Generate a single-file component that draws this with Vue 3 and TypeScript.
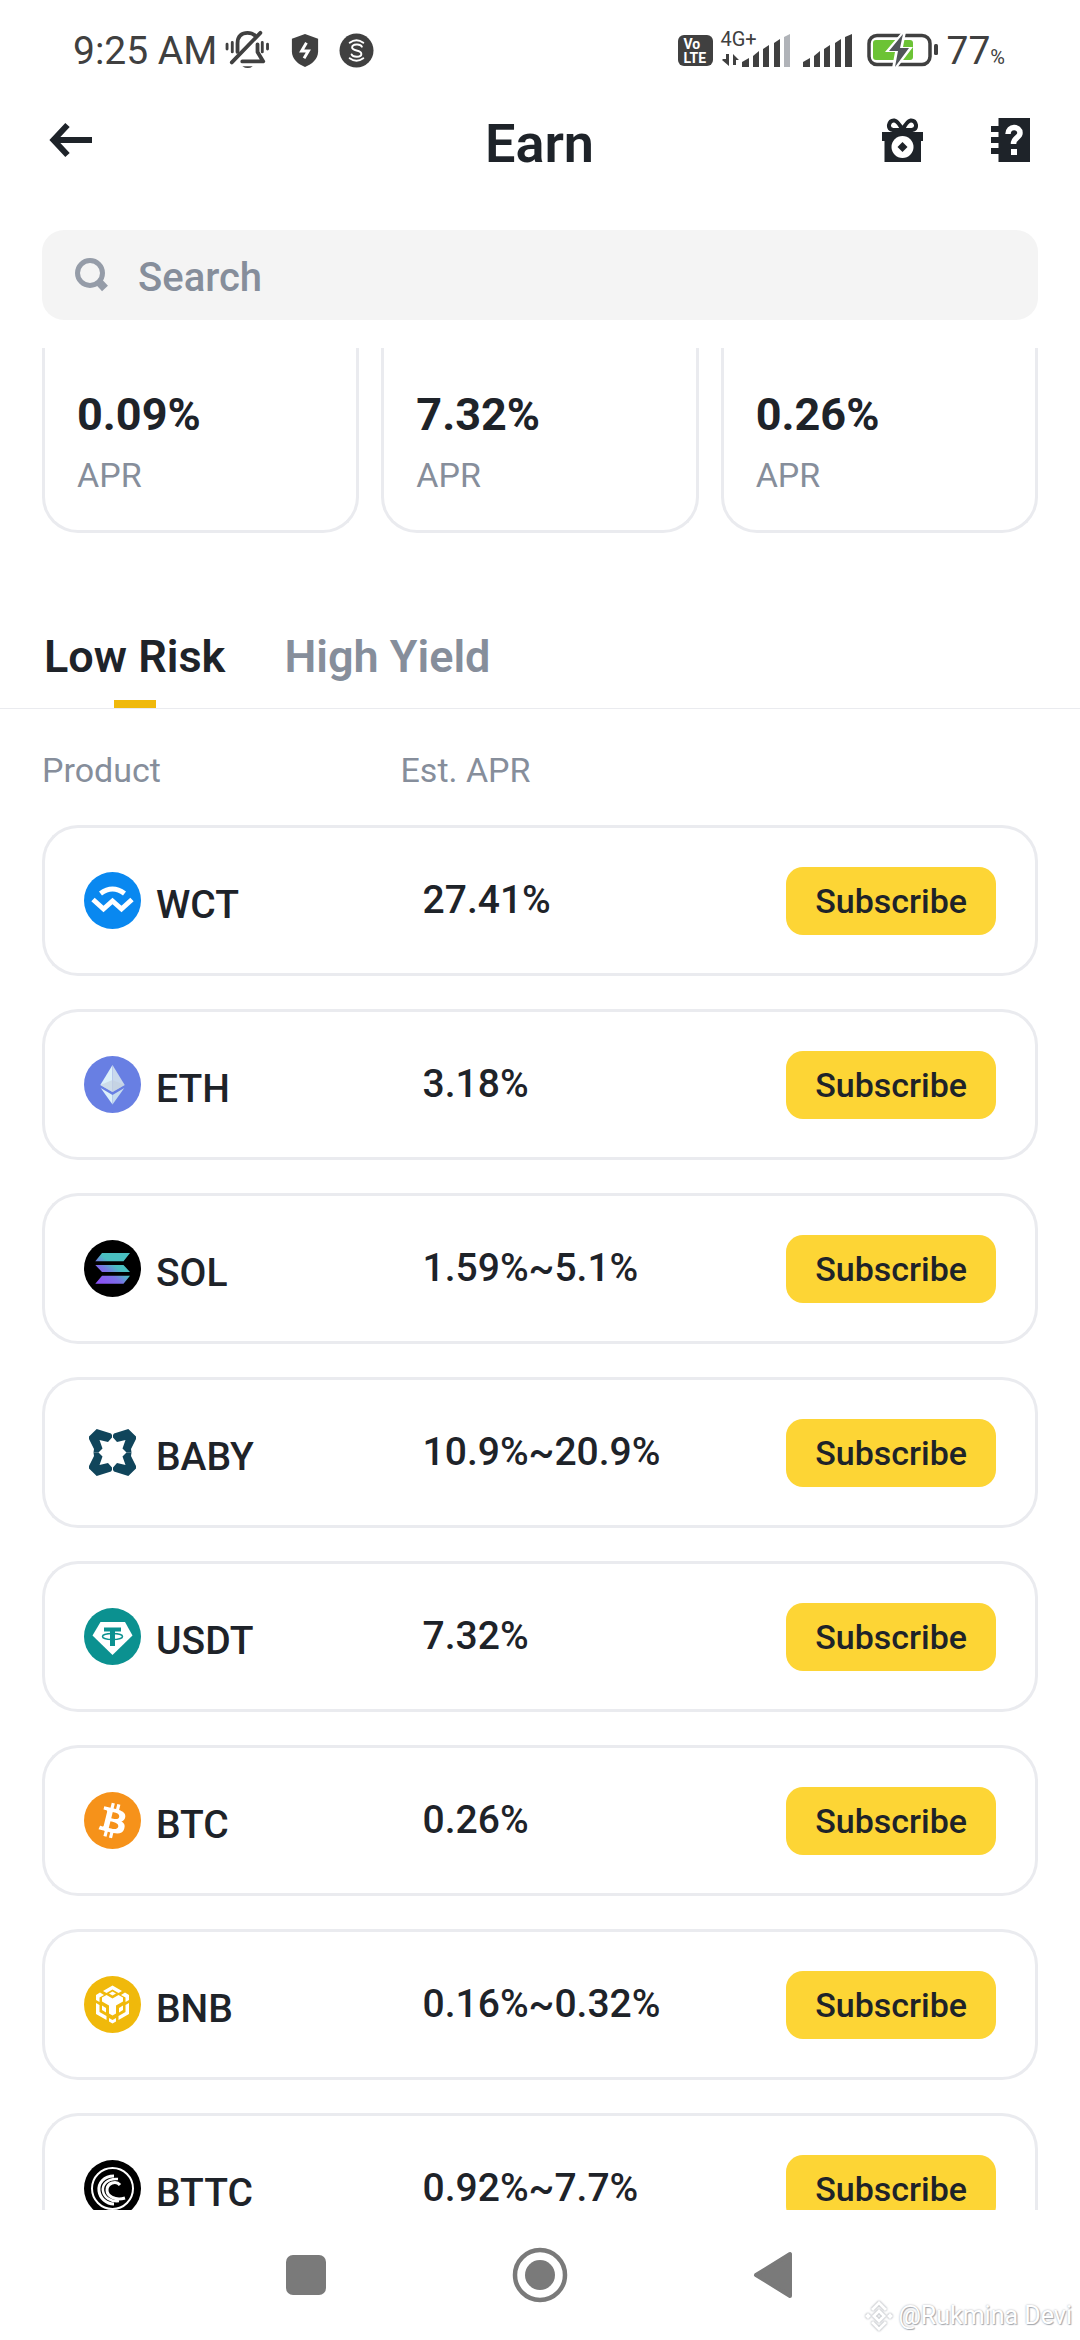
<script setup lang="ts">
import { ref } from 'vue'

interface Product {
  symbol: string
  apr: string
}

const query = ref('')
const activeTab = ref('Low Risk')
const tabs: string[] = ['Low Risk', 'High Yield']
const highlights: string[] = ['0.09%', '7.32%', '0.26%']

const products: Product[] = [
  { symbol: 'WCT', apr: '27.41%' },
  { symbol: 'ETH', apr: '3.18%' },
  { symbol: 'SOL', apr: '1.59%~5.1%' },
  { symbol: 'BABY', apr: '10.9%~20.9%' },
  { symbol: 'USDT', apr: '7.32%' },
  { symbol: 'BTC', apr: '0.26%' },
  { symbol: 'BNB', apr: '0.16%~0.32%' },
  { symbol: 'BTTC', apr: '0.92%~7.7%' },
]
</script>

<template>
  <div class="screen">
    <div class="status">
      <div class="status-left">
        <span class="clock">9:25 AM</span>
        <svg class="bell" width="46" height="40" viewBox="0 0 48 42" fill="none" stroke="#404040" stroke-width="4" stroke-linecap="round" stroke-linejoin="round">
          <path d="M2 15v5M44.500 15v5" stroke-width="3" />
          <path d="M7.500 13v10M39 13v10" stroke-width="3" />
          <path d="M13 23V14C13 6 18 3 23.500 3C27 3 29.500 4 31.500 6" />
          <path d="M34 15v8l6 10H18" />
          <path d="M37 3L7 34" />
          <path d="M18 38h11q-5 4-11 0z" fill="#404040" stroke="none" />
        </svg>
        <svg class="shield" width="28" height="33" viewBox="0 0 28 34">
          <path d="M14 0L27.500 5V18C27.500 26 21 31 14 34C7 31 .5 26 .5 18V5Z" fill="#404040" />
          <path d="M15.500 9L10.500 17.500H17.500L13 25" fill="none" stroke="#fff" stroke-width="3" />
        </svg>
        <svg width="35" height="35" viewBox="0 0 36 36">
          <circle cx="18" cy="18" r="17.500" fill="#404040" />
          <g fill="none" stroke="#fff" stroke-width="2" stroke-linecap="round">
            <path d="M11 10Q18 5 25 10M11 26Q18 31 25 26" />
            <path d="M23.500 14C22 11 13.500 11 13.500 15C13.500 19 23 17 23 21.500C23 25.500 14 25 13 22" />
          </g>
        </svg>
      </div>
      <div class="status-right">
        <span class="volte"><span>Vo</span><span>LTE</span></span>
        <span class="network">
          <span class="gen">4G+</span>
          <svg width="72" height="33" viewBox="0 0 72 33" fill="#404040">
            <path d="M2 25h3v-5h3v12L1 26zM12 31V20l6 6h-3v5z" />
            <path d="M21 28L28 24V33H21Z" /><path d="M32 22L38 17V33H32Z" /><path d="M42 15L48 11V33H42Z" /><path d="M53 9L59 5V33H53Z" />
            <path d="M63 3L69 0V33H63Z" fill="#b0b3b8" />
          </svg>
        </span>
        <svg class="signal" width="50" height="33" viewBox="0 0 50 33" fill="#404040">
          <path d="M0 28L7 24V33H0Z" /><path d="M11 22L17 17V33H11Z" /><path d="M21 15L27 11V33H21Z" /><path d="M32 9L38 5V33H32Z" /><path d="M42 3L49 0V33H42Z" />
        </svg>
        <svg class="battery" width="72" height="34" viewBox="0 0 72 34">
          <rect x="2" y="2.500" width="61" height="29" rx="8" fill="#fff" stroke="#404040" stroke-width="3.500" />
          <rect x="6" y="7" width="40" height="20" rx="3" fill="#6cc335" />
          <rect x="67" y="11" width="4" height="11" rx="1.500" fill="#404040" />
          <path d="M35 -1L18 19H28L25 35H30L46 14H36L39 -1Z" fill="#fff" />
          <path d="M36 1L22 18H31L28 34L42 15H33Z" fill="#505459" />
        </svg>
        <span class="level">77<small>%</small></span>
      </div>
    </div>

    <header class="header">
      <button class="icon-button" aria-label="Back">
        <svg width="44" height="36" viewBox="0 0 44 36" fill="none" stroke="#1e2329" stroke-width="6">
          <path d="M43 18H6M18.500 3L4.500 18L18.500 33" />
        </svg>
      </button>
      <h1>Earn</h1>
      <div class="actions">
        <button class="icon-button" aria-label="Rewards">
          <svg width="42" height="44" viewBox="0 0 42 44">
            <path d="M0 14H41V23H39V44H2.500V23H0Z" fill="#1e2329" />
            <path d="M20.500 12H11Q6.500 11 7 7Q8 2 12.500 2.500Q16 3 20.500 12ZM20.500 12H30Q34.500 11 34 7Q33 2 28.500 2.500Q25 3 20.500 12Z" fill="none" stroke="#1e2329" stroke-width="4" />
            <circle cx="20.500" cy="29" r="11" fill="#fff" />
            <path d="M20.500 24L25.500 29L20.500 34L15.500 29Z" fill="#1e2329" />
          </svg>
        </button>
        <button class="icon-button" aria-label="Guide">
          <svg width="39" height="44" viewBox="0 0 39 44">
            <path d="M7.500 0H39V44H7.500V36H0V30H7.500V25H0V19H7.500V14H0V8H7.500Z" fill="#1e2329" />
            <path d="M17 16C17 7.500 29 7.500 29 15C29 20 22.500 19 22.500 26" fill="none" stroke="#fff" stroke-width="5.500" />
            <rect x="20" y="31" width="6" height="6" fill="#fff" />
          </svg>
        </button>
      </div>
    </header>

    <label class="search">
      <svg width="34" height="36" viewBox="0 0 34 36" fill="none" stroke="#959ca8">
        <circle cx="16" cy="16" r="12.500" stroke-width="5" />
        <path d="M24 24L31 31.500" stroke-width="8" />
      </svg>
      <input v-model="query" type="text" placeholder="Search" aria-label="Search" />
    </label>

    <main class="content">
      <section class="highlights">
        <article v-for="value in highlights" :key="value" class="highlight">
          <strong>{{ value }}</strong>
          <span>APR</span>
        </article>
      </section>

      <nav class="tabs">
        <button
          v-for="tab in tabs"
          :key="tab"
          :class="['tab', { active: tab === activeTab }]"
          @click="activeTab = tab"
        >
          {{ tab }}
        </button>
      </nav>

      <table class="products">
        <colgroup>
          <col class="col-product" />
          <col />
          <col class="col-action" />
        </colgroup>
        <thead>
          <tr>
            <th scope="col">Product</th>
            <th scope="col">Est. APR</th>
            <td></td>
          </tr>
        </thead>
        <tbody>
          <tr v-for="product in products" :key="product.symbol">
            <td>
              <div class="asset">
                <svg width="57" height="57" viewBox="0 0 57 57" aria-hidden="true">
                  <g v-if="product.symbol === 'WCT'">
                    <circle cx="28.500" cy="28.500" r="28.500" fill="#0988f0" />
                    <g fill="none" stroke="#fff" stroke-width="5">
                      <path d="M16.500 21.500Q28.500 12.500 40.500 21.500" />
                      <path d="M9 27.500L19.500 37L28.500 29L37.500 37L48 27.500" />
                    </g>
                  </g>
                  <g v-else-if="product.symbol === 'ETH'">
                    <circle cx="28.500" cy="28.500" r="28.500" fill="#687fe3" />
                    <path d="M28.500 9L16.300 29L28.500 36Z" fill="#dcf0fa" />
                    <path d="M28.500 9L40.700 29L28.500 36Z" fill="#c9d9ec" />
                    <path d="M28.500 24L40.700 29L28.500 36L16.300 29Z" fill="#c3cede" opacity=".6" />
                    <path d="M16.700 32L28.500 39V48.500Z" fill="#dcf0fa" />
                    <path d="M40.300 32L28.500 39V48.500Z" fill="#c6dcef" />
                  </g>
                  <g v-else-if="product.symbol === 'SOL'">
                    <defs>
                      <linearGradient id="sol" gradientUnits="userSpaceOnUse" x1="14" y1="44" x2="38" y2="14">
                        <stop offset=".1" stop-color="#8a53f4" />
                        <stop offset=".4" stop-color="#7a70e6" />
                        <stop offset=".65" stop-color="#49bfc0" />
                      </linearGradient>
                    </defs>
                    <circle cx="28.500" cy="28.500" r="28.500" fill="#000" />
                    <path d="M18 13H46L39.500 21.300H11.300ZM11.300 25H39.500L46 32H18ZM18 35.700H46L39.500 43.700H11.300Z" fill="url(#sol)" />
                  </g>
                  <g v-else-if="product.symbol === 'BABY'" fill="#10455b">
                    <path
                      v-for="flip in ['', 'matrix(-1 0 0 1 57 0)', 'matrix(1 0 0 -1 0 57)', 'matrix(-1 0 0 -1 57 57)']"
                      :key="flip"
                      :transform="flip"
                      d="M12.700 5L27 9.500Q28.500 10.500 28 13.500L24 18L15.500 16L18.500 24.500L14.500 28.500H9.500L10 25L5 15V12.500Z"
                    />
                  </g>
                  <g v-else-if="product.symbol === 'USDT'">
                    <circle cx="28.500" cy="28.500" r="28.500" fill="#0b9190" />
                    <path d="M16.500 14H41L48.500 27.500L28.500 47L8.500 27.500Z" fill="#fff" />
                    <path d="M20 19.500H37V23.500H31V38H26V23.500H20Z" fill="#0b9190" />
                    <ellipse cx="28.500" cy="28.500" rx="10" ry="3" fill="none" stroke="#0b9190" stroke-width="1.500" />
                  </g>
                  <g v-else-if="product.symbol === 'BTC'">
                    <circle cx="28.500" cy="28.500" r="28.500" fill="#f6921a" />
                    <path transform="scale(1.78)" fill="#fff" d="M23.189 14.020c.314-2.096-1.283-3.223-3.465-3.975l.708-2.840-1.728-.43-.69 2.765c-.454-.114-.92-.22-1.385-.326l.695-2.783L15.596 6l-.708 2.839c-.376-.086-.746-.17-1.104-.26l.002-.009-2.384-.595-.46 1.846s1.283.294 1.256.312c.7.175.826.638.805 1.006l-.806 3.235c.048.012.11.03.18.057l-.183-.045-1.130 4.532c-.086.212-.303.531-.793.41.018.025-1.256-.313-1.256-.313l-.858 1.978 2.250.561c.418.105.828.215 1.231.318l-.715 2.872 1.727.43.708-2.840c.472.127.93.245 1.378.357l-.706 2.828 1.728.43.715-2.866c2.948.558 5.164.333 6.097-2.333.752-2.146-.037-3.385-1.588-4.192 1.130-.26 1.980-1.003 2.207-2.538zm-3.950 5.538c-.533 2.147-4.148.986-5.320.695l.95-3.805c1.172.293 4.929.872 4.370 3.110zm.535-5.569c-.487 1.953-3.495.96-4.470.717l.86-3.450c.975.243 4.118.696 3.610 2.733z" />
                  </g>
                  <g v-else-if="product.symbol === 'BNB'">
                    <circle cx="28.500" cy="28.500" r="28.500" fill="#f0b90b" />
                    <g fill="#fff">
                      <path d="M28.500 9.500L38 15L34.500 17L28.500 13.500L22.500 17L19 15Z" />
                      <path d="M28.500 15.500L32 17.500L28.500 19.500L25 17.500Z" />
                      <path d="M12 19L16 16.500L20 19L15.500 21.500V26L12 24Z" />
                      <path d="M45 19L41 16.500L37 19L41.500 21.500V26L45 24Z" />
                      <path d="M22.500 19L28.500 22.500L34.500 19L39 21.500V25.500L32 29.500V37.500L28.500 39.500L25 37.500V29.500L18 25.500V21.500Z" />
                      <path d="M12 27L15.500 29V36L22.500 40V44L12 38Z" />
                      <path d="M45 27L41.500 29V36L34.500 40V44L45 38Z" />
                      <path d="M18 29.500L22 32V36.500L18 34Z" />
                      <path d="M39 29.500L35 32V36.500L39 34Z" />
                      <path d="M25 42L28.500 44L32 42V45.500L28.500 47.500L25 45.500Z" />
                    </g>
                  </g>
                  <g v-else>
                    <circle cx="28.500" cy="28.500" r="28.500" fill="#000" />
                    <g fill="none" stroke="#fff">
                      <circle cx="28.500" cy="28.500" r="20.500" stroke-width="2" />
                      <path d="M30 16C20 16 14 23 15 31C16 38 22 44 30 44" stroke-width="3" />
                      <path d="M34 19C23 18 18 25 19 31C20 37 26 42 35 41" stroke-width="2.500" />
                      <path d="M36 25C32 20 23 23 23 30C23 36 31 41 41 38" stroke-width="3" />
                    </g>
                  </g>
                </svg>
                <span>{{ product.symbol }}</span>
              </div>
            </td>
            <td class="apr">{{ product.apr }}</td>
            <td class="action"><button class="subscribe">Subscribe</button></td>
          </tr>
        </tbody>
      </table>
    </main>

    <footer class="system-nav">
      <button class="icon-button" aria-label="Recent apps">
        <svg width="56" height="56" viewBox="0 0 56 56"><rect x="8" y="8" width="40" height="40" rx="7" fill="#7a7a7a" /></svg>
      </button>
      <button class="icon-button" aria-label="Home">
        <svg width="56" height="56" viewBox="0 0 56 56">
          <circle cx="28" cy="28" r="25" fill="none" stroke="#7a7a7a" stroke-width="4.500" />
          <circle cx="28" cy="28" r="15" fill="#7a7a7a" />
        </svg>
      </button>
      <button class="icon-button" aria-label="Back to previous screen">
        <svg width="56" height="56" viewBox="0 0 56 56">
          <path d="M10 28L44 7V49Z" fill="#7a7a7a" stroke="#7a7a7a" stroke-width="4" stroke-linejoin="round" />
        </svg>
      </button>
      <div class="watermark">
        <svg width="30" height="30" viewBox="0 0 30 30" fill="none" stroke="#fff" stroke-width="3">
          <path d="M8 9L15 2L22 9M8 21L15 28L22 21M15 10L20 15L15 20L10 15Z" />
          <path d="M4 12L7 15L4 18L1 15ZM26 12L29 15L26 18L23 15Z" fill="#fff" stroke="none" />
        </svg>
        <span>@Rukmina Devi</span>
      </div>
    </footer>
  </div>
</template>

<style>
body {
  background: #fff;
}
</style>

<style scoped>
* {
  box-sizing: border-box;
}

.screen {
  display: flex;
  flex-direction: column;
  height: 100vh;
  overflow: hidden;
  background: #fff;
  color: #1e2329;
  font-family: Roboto, "Liberation Sans", sans-serif;
}

svg {
  display: block;
  flex: none;
}

button {
  border: 0;
  padding: 0;
  background: none;
  color: inherit;
  font: inherit;
  cursor: pointer;
}

.status {
  display: flex;
  flex: none;
  align-items: center;
  justify-content: space-between;
  height: 100px;
  padding: 0 75px 0 73px;
  color: #404040;
}

.status-left,
.status-right {
  display: flex;
  align-items: center;
}

.clock {
  padding-top: 2px;
  font-size: 39px;
  line-height: 48px;
}

.bell {
  margin: 0 20px 0 8px;
}

.shield {
  margin-right: 20px;
}

.volte {
  display: flex;
  flex-direction: column;
  width: 35px;
  height: 31px;
  margin-right: 8px;
  padding: 2px 0 0 6px;
  border-radius: 6px;
  background: #404040;
  color: #fff;
  font-size: 14px;
  font-weight: 700;
  line-height: 14px;
}

.network {
  position: relative;
  width: 72px;
  margin-right: 10px;
}

.gen {
  position: absolute;
  top: -7px;
  left: 0;
  font-size: 20px;
  line-height: 24px;
}

.signal {
  margin-right: 14px;
}

.battery {
  margin-right: 8px;
}

.level {
  display: flex;
  align-items: baseline;
  padding-top: 2px;
  font-size: 39px;
  line-height: 48px;
}

.level small {
  font-size: 20px;
  line-height: 24px;
}

.header {
  display: grid;
  flex: none;
  grid-template-columns: 1fr auto 1fr;
  align-items: center;
  height: 80px;
  padding: 0 50px 0 49px;
}

h1 {
  margin: 0;
  padding-top: 8px;
  font-size: 54px;
  font-weight: 600;
  line-height: 64px;
}

.actions {
  display: flex;
  justify-content: flex-end;
  gap: 67px;
}

.search {
  display: flex;
  flex: none;
  align-items: center;
  gap: 30px;
  height: 90px;
  margin: 50px 42px 28px;
  padding: 0 32px;
  border-radius: 22px;
  background: #f4f4f4;
}

.search input {
  flex: 1;
  min-width: 0;
  padding: 6px 0 0;
  border: 0;
  outline: 0;
  background: none;
  color: #1e2329;
  font: 500 40px/48px Roboto, "Liberation Sans", sans-serif;
}

.search input::placeholder {
  color: #868e9b;
  opacity: 1;
}

.content {
  flex: 1;
  min-height: 0;
  overflow: hidden;
}

.highlights {
  display: grid;
  grid-template-columns: repeat(3, 1fr);
  gap: 22px;
  padding: 0 42px;
}

.highlight {
  display: flex;
  flex-direction: column;
  gap: 8px;
  padding: 37px 32px 33px;
  border: 3px solid #eaebef;
  border-top: 0;
  border-radius: 0 0 36px 36px;
}

.highlight strong {
  font-size: 45px;
  font-weight: 700;
  line-height: 60px;
}

.highlight span {
  color: #868e9b;
  font-size: 34px;
  line-height: 44px;
}

.tabs {
  display: flex;
  gap: 59px;
  margin-top: 94px;
  padding: 0 44px;
  border-bottom: 1px solid #eaebef;
}

.tab {
  position: relative;
  padding-bottom: 21px;
  color: #868e9b;
  font-size: 45px;
  font-weight: 600;
  line-height: 60px;
}

.tab.active {
  color: #1e2329;
}

.tab.active::after {
  position: absolute;
  bottom: 0;
  left: 50%;
  width: 42px;
  height: 8px;
  margin-left: -21px;
  background: #f0b90b;
  content: "";
}

.products {
  width: calc(100% - 84px);
  margin: 0 42px;
  border-spacing: 0 33px;
  table-layout: fixed;
}

.col-product {
  width: 36%;
}

.col-action {
  width: 28%;
}

th,
td {
  padding: 0;
}

th {
  height: 50px;
  padding-top: 6px;
  color: #868e9b;
  font-size: 34px;
  font-weight: 400;
  line-height: 44px;
  text-align: left;
}

tbody td {
  height: 151px;
  border: solid #eaebef;
  border-width: 3px 0;
}

tbody td:first-child {
  padding-left: 39px;
  border-left-width: 3px;
  border-radius: 36px 0 0 36px;
}

tbody td:last-child {
  padding-right: 39px;
  border-right-width: 3px;
  border-radius: 0 36px 36px 0;
}

.asset {
  display: flex;
  align-items: center;
  gap: 15px;
}

.asset span {
  padding-top: 8px;
  font-size: 39px;
  font-weight: 500;
  line-height: 48px;
}

.apr {
  padding: 0 0 2px 22px;
  font-size: 39px;
  font-weight: 500;
}

.action {
  text-align: right;
}

.subscribe {
  height: 68px;
  padding: 0 29px;
  border-radius: 17px;
  background: #fdd535;
  font-size: 34px;
  font-weight: 500;
  line-height: 68px;
  vertical-align: middle;
}

.system-nav {
  position: relative;
  display: flex;
  flex: none;
  align-items: center;
  justify-content: center;
  gap: 178px;
  height: 130px;
}

.watermark {
  position: absolute;
  right: 8px;
  bottom: 8px;
  display: flex;
  align-items: center;
  gap: 4px;
  color: #fff;
  font-size: 25px;
  line-height: 32px;
  text-shadow: 0 0 2px #a5a9b0, 1px 1px 1px #a5a9b0;
}

.watermark svg {
  filter: drop-shadow(0 0 1px #8a8f98);
}
</style>
